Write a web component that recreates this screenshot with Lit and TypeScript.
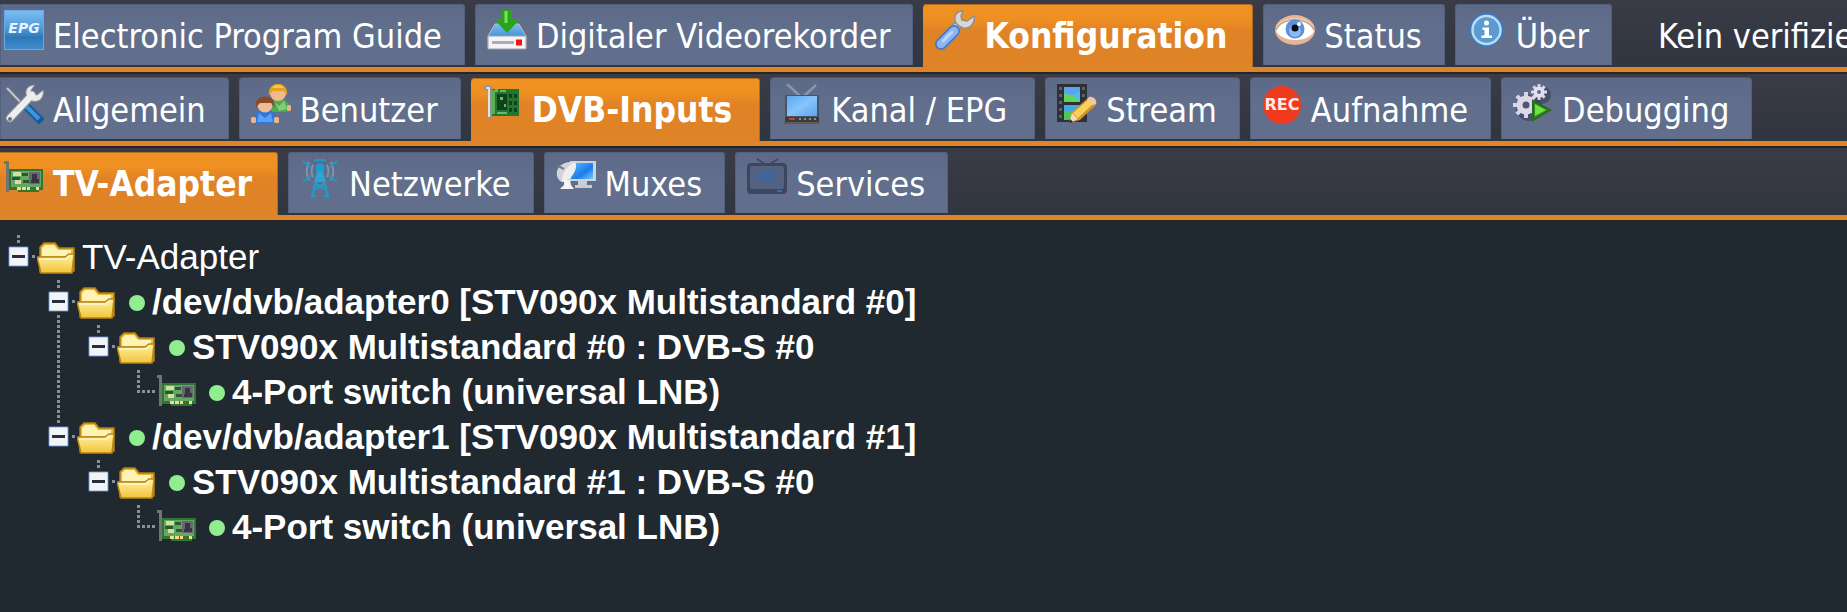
import { LitElement, html, css, svg, nothing, type TemplateResult } from "lit";
import { customElement, property, state } from "lit/decorators.js";
import { classMap } from "lit/directives/class-map.js";

const gearTeeth = (cx: number, cy: number, r: number, w: number) =>
  [0, 45, 90, 135].map(
    (a) => svg`<rect x=${cx - w / 2} y=${cy - r} width=${w} height=${r * 2} transform="rotate(${a} ${cx} ${cy})" fill="#d9d4ea"/>`
  );

const icons: Record<string, TemplateResult> = {
  epg: svg`
    <defs><linearGradient id="g" x2="0" y2="1"><stop stop-color="#7cbcf0"/><stop offset=".45" stop-color="#4d9ada"/><stop offset=".7" stop-color="#2f78b8"/><stop offset="1" stop-color="#3f8dd0"/></linearGradient></defs>
    <rect width="40" height="40" fill="#6aa9de"/><rect x="1" y="1" width="38" height="38" fill="url(#g)"/>
    <text x="20" y="23" text-anchor="middle" font-family="DejaVu Sans, sans-serif" font-weight="700" font-style="italic" font-size="14" fill="#e8f4ff">EPG</text>`,
  drive: svg`
    <defs><linearGradient id="g" x2="0" y2="1"><stop stop-color="#fff"/><stop offset="1" stop-color="#cfcfd4"/></linearGradient></defs>
    <path d="M8 14h24l7 12v12H1V26z" fill="url(#g)" stroke="#b9bac4"/>
    <path d="M1 26h38v13H1z" fill="#f4f4f6" stroke="#9fa0aa"/>
    <path d="M5 31h22v3H5z" fill="#a9acba"/><path d="M29 29.500h6v6h-6z" fill="#ee1414"/>
    <path d="M15 0h10v9h8L20 23 7 9h8z" fill="#2aa31c"/><path d="M17.500 1h3v12h-3z" fill="#7fdd62"/>`,
  wrench: svg`
    <path d="M17 21l9-9" stroke="#8e8f93" stroke-width="9"/><path d="M17 21l9-9" stroke="#d7d6d4" stroke-width="6"/>
    <path d="M28 1c-7 0-10 6-7 12 3 5 10 7 15 3 3-3 4-6 3-10l-7 5-5-1-1-4z" fill="#d9d7d3" stroke="#8e8e90" stroke-width="1.500"/>
    <path d="M6 34L19 21" stroke="#4578cc" stroke-width="12" stroke-linecap="round"/>
    <path d="M6 34L19 21" stroke="#8cb6f6" stroke-width="8.500" stroke-linecap="round"/>
    <path d="M8 31l9-9" stroke="#c0dafc" stroke-width="2.500" stroke-linecap="round"/>`,
  eye: svg`
    <ellipse cx="20" cy="20" rx="20" ry="15" fill="#e4b697"/><path d="M1 18C6 5 34 5 39 18 34 9 8 9 1 18z" fill="#fbe4d2"/>
    <path d="M1 21C6 7 34 7 39 21 34 33 7 33 1 21z" fill="#fff"/>
    <path d="M1 20C7 6 33 6 39 20" fill="none" stroke="#c4a189" stroke-width="1.500"/>
    <circle cx="20" cy="19" r="9.500" fill="#5d8fdd"/><circle cx="20" cy="21" r="6" fill="#8cb8f4"/>
    <circle cx="20" cy="18" r="3.500" fill="#0b0d18"/><circle cx="24" cy="14" r="2" fill="#fff"/>`,
  info: svg`
    <circle cx="19.500" cy="20" r="17" fill="#3d7cba"/><circle cx="19.500" cy="20" r="14" fill="#5c9ad2" stroke="#bcdcf4" stroke-width="2.500"/>
    <circle cx="19.500" cy="13" r="2.500" fill="#fff"/><path d="M15.500 17.500h6.500v8h3V28H14.500v-2.500h3v-5.500h-2z" fill="#fff"/>`,
  tools: svg`
    <path d="M3 4l16 17" stroke="#7d7f86" stroke-width="3.500"/><path d="M3 4l16 17" stroke="#d4d5d8" stroke-width="1.500"/>
    <path d="M22 22l13 13" stroke="#155a9c" stroke-width="8" stroke-linecap="square"/><path d="M22 22l13 13" stroke="#3a95dc" stroke-width="4"/>
    <path d="M6 34L28 11" stroke="#8a8b90" stroke-width="9" stroke-linecap="round"/>
    <path d="M31 1c-8 0-11 6-8 12 3 5 10 6 14 2 2-3 3-5 2-9l-6 5-5-1-1-4z" fill="#e9e9ea" stroke="#8a8b90"/>
    <path d="M6 34L28 11" stroke="#eeeeef" stroke-width="6.500" stroke-linecap="round"/><circle cx="6" cy="35" r="2" fill="#6a6f80"/>`,
  users: svg`
    <path d="M20 27c0-8 2-12 8-12s11 3 11 12l-4 1H22z" fill="#4faa4e"/><path d="M24 18l4 4 5-5 3 8-8 2z" fill="#82cc7a"/>
    <rect x="36" y="21" width="4" height="6" rx="1.500" fill="#edb586"/>
    <circle cx="27" cy="9" r="8" fill="#f0b98e"/><path d="M18 11C16-4 38-4 36 11l-3-4H22z" fill="#e8a020"/><path d="M21 4c3-4 9-4 12 0z" fill="#f8c850"/>
    <path d="M3 39c0-9 3-13 11-13s11 4 11 13z" fill="#2e78dc"/><path d="M8 29l6 5 6-5 2 9H6z" fill="#5aa0f4"/>
    <rect x="0" y="33" width="5" height="6" rx="1.500" fill="#edb586"/><rect x="23" y="33" width="5" height="6" rx="1.500" fill="#edb586"/>
    <circle cx="14" cy="21" r="7.500" fill="#f0bc98"/><path d="M5 23C2 9 26 9 23 23l-3-4H9z" fill="#8a4a28"/>`,
  pci: svg`
    <path d="M8 5h28v27H8z" fill="#23762f"/><path d="M8 6h4v24H8z" fill="#56b054"/>
    <path d="M14 10h10v16H14z" fill="#123f1e"/><path d="M26 10h3v4h-3zM31 10h3v4h-3zM26 17h3v4h-3zM31 17h3v4h-3zM26 24h3v4h-3zM31 24h3v4h-3z" fill="#114220"/>
    <path d="M12 5h3v3h-3zM17 6h6v2h-6zM14 28h10v2H14zM17 13h3v3h-3zM21 20h2v3h-2z" fill="#5cc060"/>
    <path d="M1 2h8v33H6V6H1z" fill="#8d9294"/><path d="M3 3h4v30H5V5H3z" fill="#dfe3e0"/>`,
  tv: svg`
    <defs><linearGradient id="g" x2="1" y2="1"><stop stop-color="#58aaf4"/><stop offset=".5" stop-color="#86c4fa"/><stop offset="1" stop-color="#5ba6ee"/></linearGradient></defs>
    <path d="M5 0l13 12M34 1L22 12" stroke="#8d95a4" stroke-width="2.500"/><path d="M3 11h34v29H3z" fill="#4c545e"/>
    <path d="M5 12h30v20H5z" fill="url(#g)"/><path d="M3 33h34v5H3z" fill="#3a3c40"/><path d="M7 34h6v2H7z" fill="#d03848"/>
    <path d="M17 34h2v2h-2zM22 34h2v2h-2zM27 34h2v2h-2zM32 34h2v2h-2z" fill="#878c92"/><path d="M2 38h36v2H2z" fill="#605c4e"/>`,
  film: svg`
    <path d="M0 0h30v38H0z" fill="#2d3136"/><path d="M7 3h16v15H7z" fill="#45c2e8"/><path d="M7 3h16v4L10 14H7z" fill="#5ca4ee"/><path d="M7 10c6 0 11 2 16 8H7z" fill="#62d45c"/>
    <path d="M7 21h16v15H7z" fill="#45a8e0"/><path d="M7 27c6 0 11 2 16 8H7z" fill="#52c458"/>
    <path d="M2 3h3v3H2zM2 10h3v3H2zM2 17h3v3H2zM2 24h3v3H2zM2 31h3v3H2zM25 3h3v3h-3zM25 10h3v3h-3z" fill="#5b6168"/>
    <path d="M12 39l3-11 16-14 8 7-16 15z" fill="#d0922c"/><path d="M16 29l15-13 5 4-15 14z" fill="#f8d25c"/><path d="M31 14c3-4 10 2 8 6l-3 1-6-5z" fill="#f0c8a0"/><path d="M12 39l3-10 6 6z" fill="#f3dcb0"/><path d="M12 39l1-4 3 3z" fill="#222"/>`,
  rec: svg`
    <circle cx="20" cy="21" r="19" fill="#f03a1e"/>
    <text x="20" y="26" text-anchor="middle" font-family="DejaVu Sans, sans-serif" font-weight="700" font-size="16" fill="#fbe8e4">REC</text>`,
  gears: svg`
    <circle cx="16" cy="24" r="13" fill="#363d54" opacity=".6"/><circle cx="29" cy="11" r="9" fill="#363d54" opacity=".6"/>
    ${gearTeeth(26, 8, 8, 3)}<circle cx="26" cy="8" r="5.500" fill="#e4e0f0"/><circle cx="26" cy="8" r="2" fill="#5f6c8a"/>
    ${gearTeeth(13, 21, 13, 4)}<circle cx="13" cy="21" r="9.500" fill="#dcd8ea"/><circle cx="13" cy="21" r="3.500" fill="#4c5672"/>
    <path d="M20 17v19l17-10z" fill="#2f8c1c" stroke="#2b6b20" stroke-width="2"/><path d="M22 20v12l11-6z" fill="#6ee040"/>`,
  mast: svg`
    <g fill="none" stroke="#2399c8" stroke-width="2"><path d="M20 8L12 38M20 8l8 30M17 18h6M15 25l9 6M25 25l-9 6M11 38h5M24 38h5" stroke-width="2.500"/>
    <path d="M9 4c-3 5-3 13 0 18M31 4c3 5 3 13 0 18M13 7c-2 4-2 8 0 12M27 7c2 4 2 8 0 12" stroke="#8291ac"/><path d="M3 3l8 7M37 3l-8 7M3 24l8-6M37 24l-8-6M14 2h12"/></g>
    <circle cx="20" cy="10" r="4.500" fill="#1a9fd0"/><path d="M17 14h6l3 10H14z" fill="#2aa6d4"/>`,
  dish: svg`
    <defs><linearGradient id="g" x2="1" y2="1"><stop stop-color="#56bdf8"/><stop offset=".6" stop-color="#1a7cec"/><stop offset="1" stop-color="#7cc8fa"/></linearGradient></defs>
    <path d="M14 3h26v20H12z" fill="#cdd3dc"/><path d="M17 5h20v16H15z" fill="url(#g)"/><path d="M22 23h9v4h5v3H19v-3h3z" fill="#c8ccd4"/>
    <path d="M1 13C3 6 12 3 19 4L6 24C2 22 0 18 1 13z" fill="#d2d4d9"/><path d="M19 4c4 6-4 19-13 20C5 17 11 7 19 4z" fill="#eeeef0"/>
    <path d="M8 11l-6-3" stroke="#777b84" stroke-width="2"/><path d="M8 22h6l1 5 3 4H4l4-4z" fill="#f2f3f5"/>`,
  darktv: svg`
    <path d="M10 1l8 5M31 1l-8 5" stroke="#3d475c" stroke-width="1.500"/><rect x="0" y="5" width="40" height="31" rx="4" fill="#3c475f"/>
    <rect x="3" y="8" width="34" height="23" rx="2" fill="#54627f"/><path d="M10 14l7-1 5 1 4-4 5 3-4 5 1 5-8 3-3-4-6 1-3-5 4-1z" fill="#41659a"/><path d="M30 33h5" stroke="#3c6cae" stroke-width="2"/>`,
  card: svg`
    <g transform="translate(0 -2)"><path d="M0 5h5v31H2V8H0z" fill="#6f7670"/><path d="M5 13h34v21h-4v2H14v-2H5z" fill="#2f7635"/><path d="M7 15h30v16H7z" fill="#67a565"/>
    <path d="M9 16h8v4H9zM11 24h6v4h-6z" fill="#cfe0a0"/><path d="M18 17h6v3h-6zM8 21h8v3H8zM19 24h6v3h-6z" fill="#285a2f"/>
    <path d="M25 16h11v12H25z" fill="#666a70"/><path d="M28 18h5v5h2v4h-8v-3h1z" fill="#3a3344"/><path d="M13 31h4v3h-4zM18 31h4v3h-4zM23 31h3v3h-3zM32 31h3v3h-3z" fill="#f2dc8a"/></g>`,
  folder: svg`
    <defs><linearGradient id="g" x2="0" y2="1"><stop stop-color="#fff2a6"/><stop offset="1" stop-color="#f2c437"/></linearGradient></defs>
    <path d="M3 35V10l4-4h11l4 5h15v23z" fill="#e7b83c" stroke="#b27d12" stroke-width="1.500"/><path d="M5 11l3-3h9l4 5h13v6H5z" fill="#fff3b4"/>
    <path d="M0 20h28l4-3h5l-2 19H4z" fill="url(#g)" stroke="#b98416" stroke-width="1.500"/><path d="M3 22h26l3-3" fill="none" stroke="#fff8cc" stroke-width="1.500"/>`,
};

const icon = (name: string) => html`<svg class="icon" viewBox="0 0 40 40" aria-hidden="true">${icons[name]}</svg>`;

interface Tab {
  label: string;
  icon: string;
  roomy?: boolean;
}

@customElement("tab-strip")
export class TabStrip extends LitElement {
  @property({ attribute: false }) tabs: Tab[] = [];
  @property() active = "";
  @property() note = "";
  @property({ type: Boolean }) nested = false;

  static styles = css`
    :host { display: block; }
    .bar {
      display: flex;
      align-items: flex-start;
      gap: 10px;
      overflow: hidden;
      padding-top: 4px;
      background: linear-gradient(#393c46, #31353f);
      border-bottom: 5px solid #de8529;
    }
    .edge { height: 2px; background: #26262a; }
    .tab {
      display: flex;
      flex: none;
      align-items: flex-start;
      gap: 9px;
      height: 61px;
      margin: 0 0 2px;
      padding: 6px 23px 0 12px;
      border: 0;
      border-radius: 4px 4px 0 0;
      background: linear-gradient(#5d6986, #616f8c 40%, #616f8c);
      box-shadow: inset 0 1px #536080, inset -1px 0 #536080, inset 1px 0 #536080;
      color: #fff;
      font: 34px/52px "DejaVu Sans Condensed", "DejaVu Sans", sans-serif;
      white-space: nowrap;
      cursor: pointer;
    }
    .tab:first-child { padding-left: 4px; border-top-left-radius: 0; }
    .nested .tab { box-shadow: 0 -1px #70502f, inset -1px 0 #536080, inset 1px 0 #536080; }
    .tab.active, .nested .tab.active {
      height: 63px;
      margin: 0;
      padding-right: 26px;
      background: linear-gradient(#f09224, #ee8f22 16px, #e08326 26px, #de8326);
      box-shadow: inset 0 1px #b56b1e, inset -1px 0 #b56b1e;
      font: 700 35px/52px "DejaVu Sans Condensed", "DejaVu Sans", sans-serif;
    }
    .tab.roomy, .nested .tab.active.roomy { padding-right: 28px; }
    .icon { flex: none; width: 40px; height: 40px; }
    .note {
      flex: none;
      padding: 6px 0 0 36px;
      color: #fff;
      font: 34px/52px "DejaVu Sans Condensed", "DejaVu Sans", sans-serif;
      white-space: nowrap;
    }
  `;

  render() {
    return html`
      <div class=${classMap({ bar: true, nested: this.nested })} role="tablist">
        ${this.tabs.map(
          (t) => html`<button
            class=${classMap({ tab: true, active: t.label === this.active, roomy: !!t.roomy })}
            role="tab"
            aria-selected=${t.label === this.active}
            @click=${() => (this.active = t.label)}
          >${icon(t.icon)}<span>${t.label}</span></button>`
        )}
        ${this.note ? html`<span class="note">${this.note}</span>` : nothing}
      </div>
      <div class="edge"></div>
    `;
  }
}

interface TreeNode {
  id: string;
  label: string;
  online?: boolean;
  children?: TreeNode[];
}

const frontend = (n: number): TreeNode => ({
  id: `adapter${n}`,
  label: `/dev/dvb/adapter${n} [STV090x Multistandard #${n}]`,
  online: true,
  children: [
    {
      id: `frontend${n}`,
      label: `STV090x Multistandard #${n} : DVB-S #0`,
      online: true,
      children: [{ id: `switch${n}`, label: "4-Port switch (universal LNB)", online: true }],
    },
  ],
});

const tree: TreeNode = { id: "root", label: "TV-Adapter", children: [frontend(0), frontend(1)] };

@customElement("adapter-tree")
export class AdapterTree extends LitElement {
  @state() private closed = new Set<string>();

  static styles = css`
    :host { display: block; padding-top: 12px; }
    ul { margin: 0; padding: 0; list-style: none; }
    .row { display: flex; align-items: center; height: 45px; color: #fff; font: 35px/45px "Liberation Sans", Arial, sans-serif; white-space: nowrap; }
    .online { font-weight: 700; }
    .lines { flex: none; width: 40px; height: 45px; }
    .join { display: block; flex: none; width: 37px; height: 45px; margin: 0; padding: 0; border: 0; background: none; }
    button.join { cursor: pointer; }
    .icon { flex: none; width: 40px; height: 40px; }
    .label { padding-left: 5px; }
    .dot { flex: none; width: 16px; height: 16px; margin: 2px 7px 0 12px; border-radius: 50%; background: #90ee90; }
  `;

  private toggle(id: string) {
    const next = new Set(this.closed);
    next.has(id) ? next.delete(id) : next.add(id);
    this.closed = next;
  }

  private dots(xs: number[], ys: number[]) {
    return xs.flatMap((x) => ys.map((y) => svg`<rect x=${x} y=${y} width="3" height="3" fill="#8b9096"/>`));
  }

  private item(n: TreeNode, trail: boolean[], more: boolean): TemplateResult {
    const open = !this.closed.has(n.id);
    return html`<li role="treeitem" aria-label=${n.label}>
      <div class=${classMap({ row: true, online: !!n.online })}>
        ${trail.map(
          (line) => html`<svg class="lines" viewBox="0 0 40 45" aria-hidden="true">${line ? this.dots([17], [1, 6, 11, 16, 21, 26, 31, 36, 41]) : nothing}</svg>`
        )}
        ${n.children
          ? html`<button class="join" aria-label="${n.label}" aria-expanded=${open} @click=${() => this.toggle(n.id)}>
              <svg class="join" viewBox="0 0 37 45" aria-hidden="true">
                ${this.dots([17], [1, 6])}${more ? this.dots([17], [36, 41]) : nothing}${this.dots([32], [21])}
                <rect x="8" y="12" width="21" height="21" rx="2" fill="#3e5880"/>
                <rect x="9" y="13" width="19" height="19" rx="1" fill="#c3cedd"/>
                <rect x="10" y="14" width="17" height="17" fill="#f2f4f7"/>
                <path d="M12 22.500h13" stroke="#272f3c" stroke-width="3"/>${open ? nothing : svg`<path d="M18.500 16v13" stroke="#272f3c" stroke-width="3"/>`}
              </svg></button>`
          : html`<svg class="join" viewBox="0 0 37 45" aria-hidden="true">${this.dots([17], [1, 6, 11, 16, 21])}${this.dots([22, 27, 32], [21])}</svg>`}
        ${icon(n.children ? "folder" : "card")}
        ${n.online ? html`<span class="dot"></span><span>${n.label}</span>` : html`<span class="label">${n.label}</span>`}
      </div>
      ${n.children && open
        ? html`<ul role="group">${n.children.map((c, i) =>
            this.item(c, n.id === "root" ? [false] : [...trail, more], i < n.children!.length - 1))}</ul>`
        : nothing}
    </li>`;
  }

  render() {
    return html`<ul role="tree">${this.item(tree, [], false)}</ul>`;
  }
}

@customElement("app-root")
export class AppRoot extends LitElement {
  static styles = css`
    :host { display: block; min-height: 100vh; overflow: hidden; background: #202830; }
  `;

  private main: Tab[] = [
    { label: "Electronic Program Guide", icon: "epg" },
    { label: "Digitaler Videorekorder", icon: "drive" },
    { label: "Konfiguration", icon: "wrench" },
    { label: "Status", icon: "eye" },
    { label: "Über", icon: "info" },
  ];
  private config: Tab[] = [
    { label: "Allgemein", icon: "tools" },
    { label: "Benutzer", icon: "users" },
    { label: "DVB-Inputs", icon: "pci", roomy: true },
    { label: "Kanal / EPG", icon: "tv", roomy: true },
    { label: "Stream", icon: "film" },
    { label: "Aufnahme", icon: "rec" },
    { label: "Debugging", icon: "gears" },
  ];
  private inputs: Tab[] = [
    { label: "TV-Adapter", icon: "card" },
    { label: "Netzwerke", icon: "mast" },
    { label: "Muxes", icon: "dish" },
    { label: "Services", icon: "darktv" },
  ];

  render() {
    return html`
      <tab-strip .tabs=${this.main} active="Konfiguration" note="Kein verifizierter Zugriff"></tab-strip>
      <tab-strip .tabs=${this.config} active="DVB-Inputs" nested></tab-strip>
      <tab-strip .tabs=${this.inputs} active="TV-Adapter"></tab-strip>
      <adapter-tree></adapter-tree>
    `;
  }
}
